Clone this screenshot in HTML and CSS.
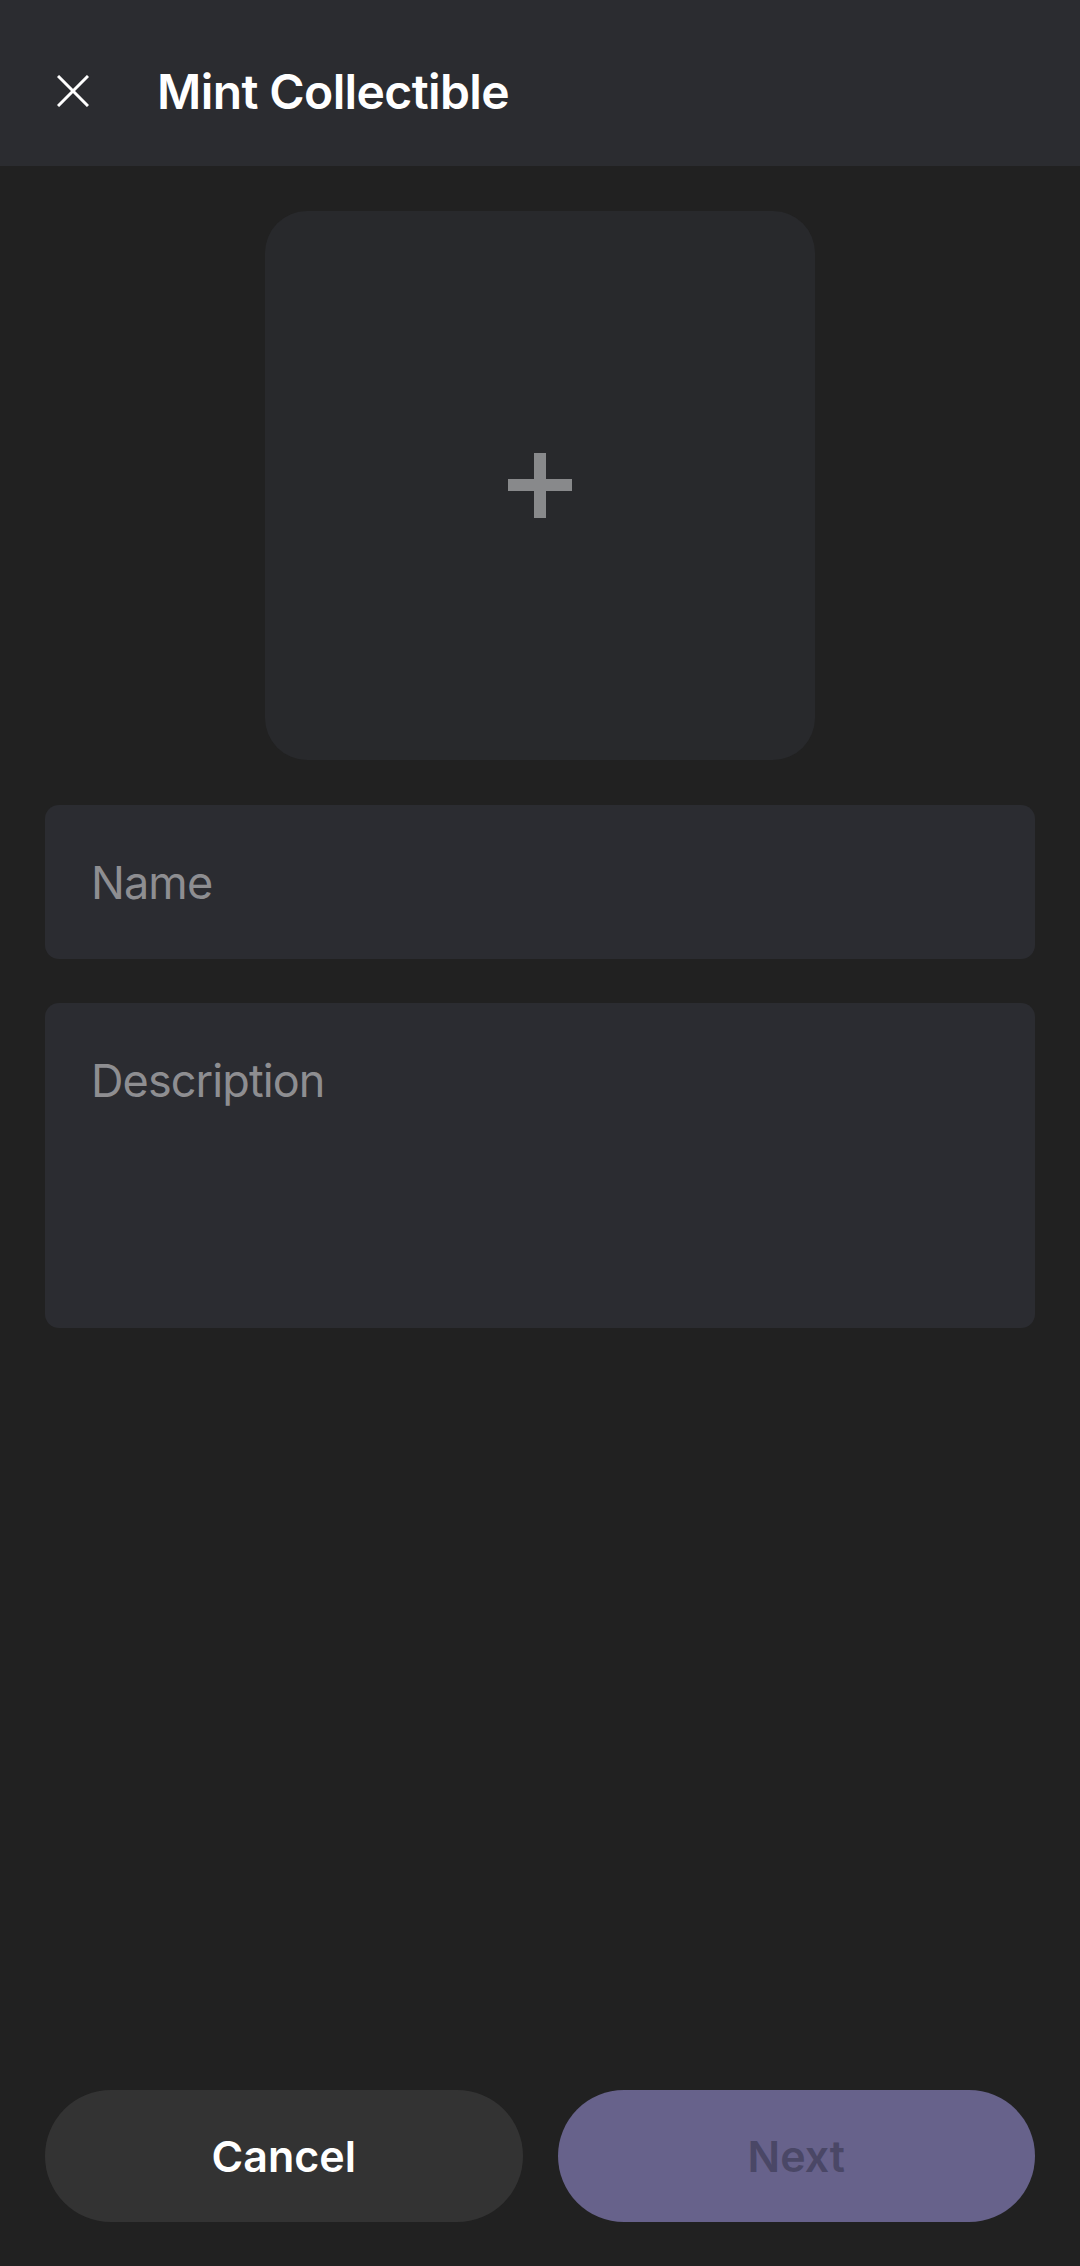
FILE: index.html
```html
<!DOCTYPE html>
<html lang="en">

<head>
    <meta charset="UTF-8">
    <title>Mint Collectible</title>
    <link rel="stylesheet" href="styles.css">
</head>

<body>
    <div class="screen">
        <div class="topbar">
            <button class="close-btn" aria-label="Close">
                <svg width="32" height="32" viewBox="0 0 32 32">
                    <path d="M1 1 L31 31 M31 1 L1 31" stroke="#fff" stroke-width="3" fill="none" />
                </svg>
            </button>
            <h1 class="title">Mint Collectible</h1>
        </div>

        <div class="form">
            <div class="picker">
                <svg width="64" height="65" viewBox="0 0 64 65">
                    <rect x="26" y="0" width="12" height="65" fill="#88898b" />
                    <rect x="0" y="26" width="64" height="12" fill="#88898b" />
                </svg>
            </div>
            <input type="text" class="field" placeholder="Name">
            <textarea class="field area" placeholder="Description"></textarea>
        </div>

        <div class="actions">
            <button class="btn cancel">Cancel</button>
            <button class="btn next" disabled>Next</button>
        </div>
    </div>
</body>

</html>
```

FILE: styles.css
```css
* {
    margin: 0;
    padding: 0;
    box-sizing: border-box;
}

body {
    background-color: #212121;
    font-family: Inter, "Noto Sans", sans-serif;
    color: #fff;
}

.screen {
    width: 1080px;
    height: 2266px;
    display: flex;
    flex-direction: column;
}

.topbar {
    height: 166px;
    padding: 16px 0 0 57px;
    background-color: #2b2c30;
    display: flex;
    align-items: center;
    gap: 68px;
}

.close-btn {
    width: 32px;
    height: 32px;
    border: none;
    background: none;
    display: flex;
}

.title {
    font-size: 48px;
    font-weight: 600;
    letter-spacing: -0.6px;
    color: #fff;
}

.form {
    padding: 45px 45px 0 45px;
    display: flex;
    flex-direction: column;
    gap: 45px;
}

.picker {
    width: 550px;
    height: 549px;
    margin: 0 auto;
    border-radius: 42px;
    background-color: #28292c;
    display: flex;
    align-items: center;
    justify-content: center;
}

.field {
    width: 990px;
    height: 154px;
    border: none;
    outline: none;
    border-radius: 14px;
    background-color: #2b2c31;
    padding: 0 46px;
    font-family: Inter, "Noto Sans", sans-serif;
    font-size: 45px;
    letter-spacing: -0.9px;
    color: #fff;
}

.field::placeholder {
    color: #8e8e91;
}

.area {
    height: 325px;
    margin-top: -1px;
    padding-top: 50px;
    line-height: 56px;
    resize: none;
}

.actions {
    margin-top: auto;
    padding: 0 45px 44px 45px;
    display: flex;
    gap: 35px;
}

.btn {
    flex: 1;
    height: 132px;
    border: none;
    border-radius: 66px;
    font-family: Inter, "Noto Sans", sans-serif;
    font-size: 43px;
    font-weight: 600;
}

.cancel {
    background-color: #333333;
    color: #fff;
}

.next {
    background-color: #67628b;
    color: #4a4766;
}
```
